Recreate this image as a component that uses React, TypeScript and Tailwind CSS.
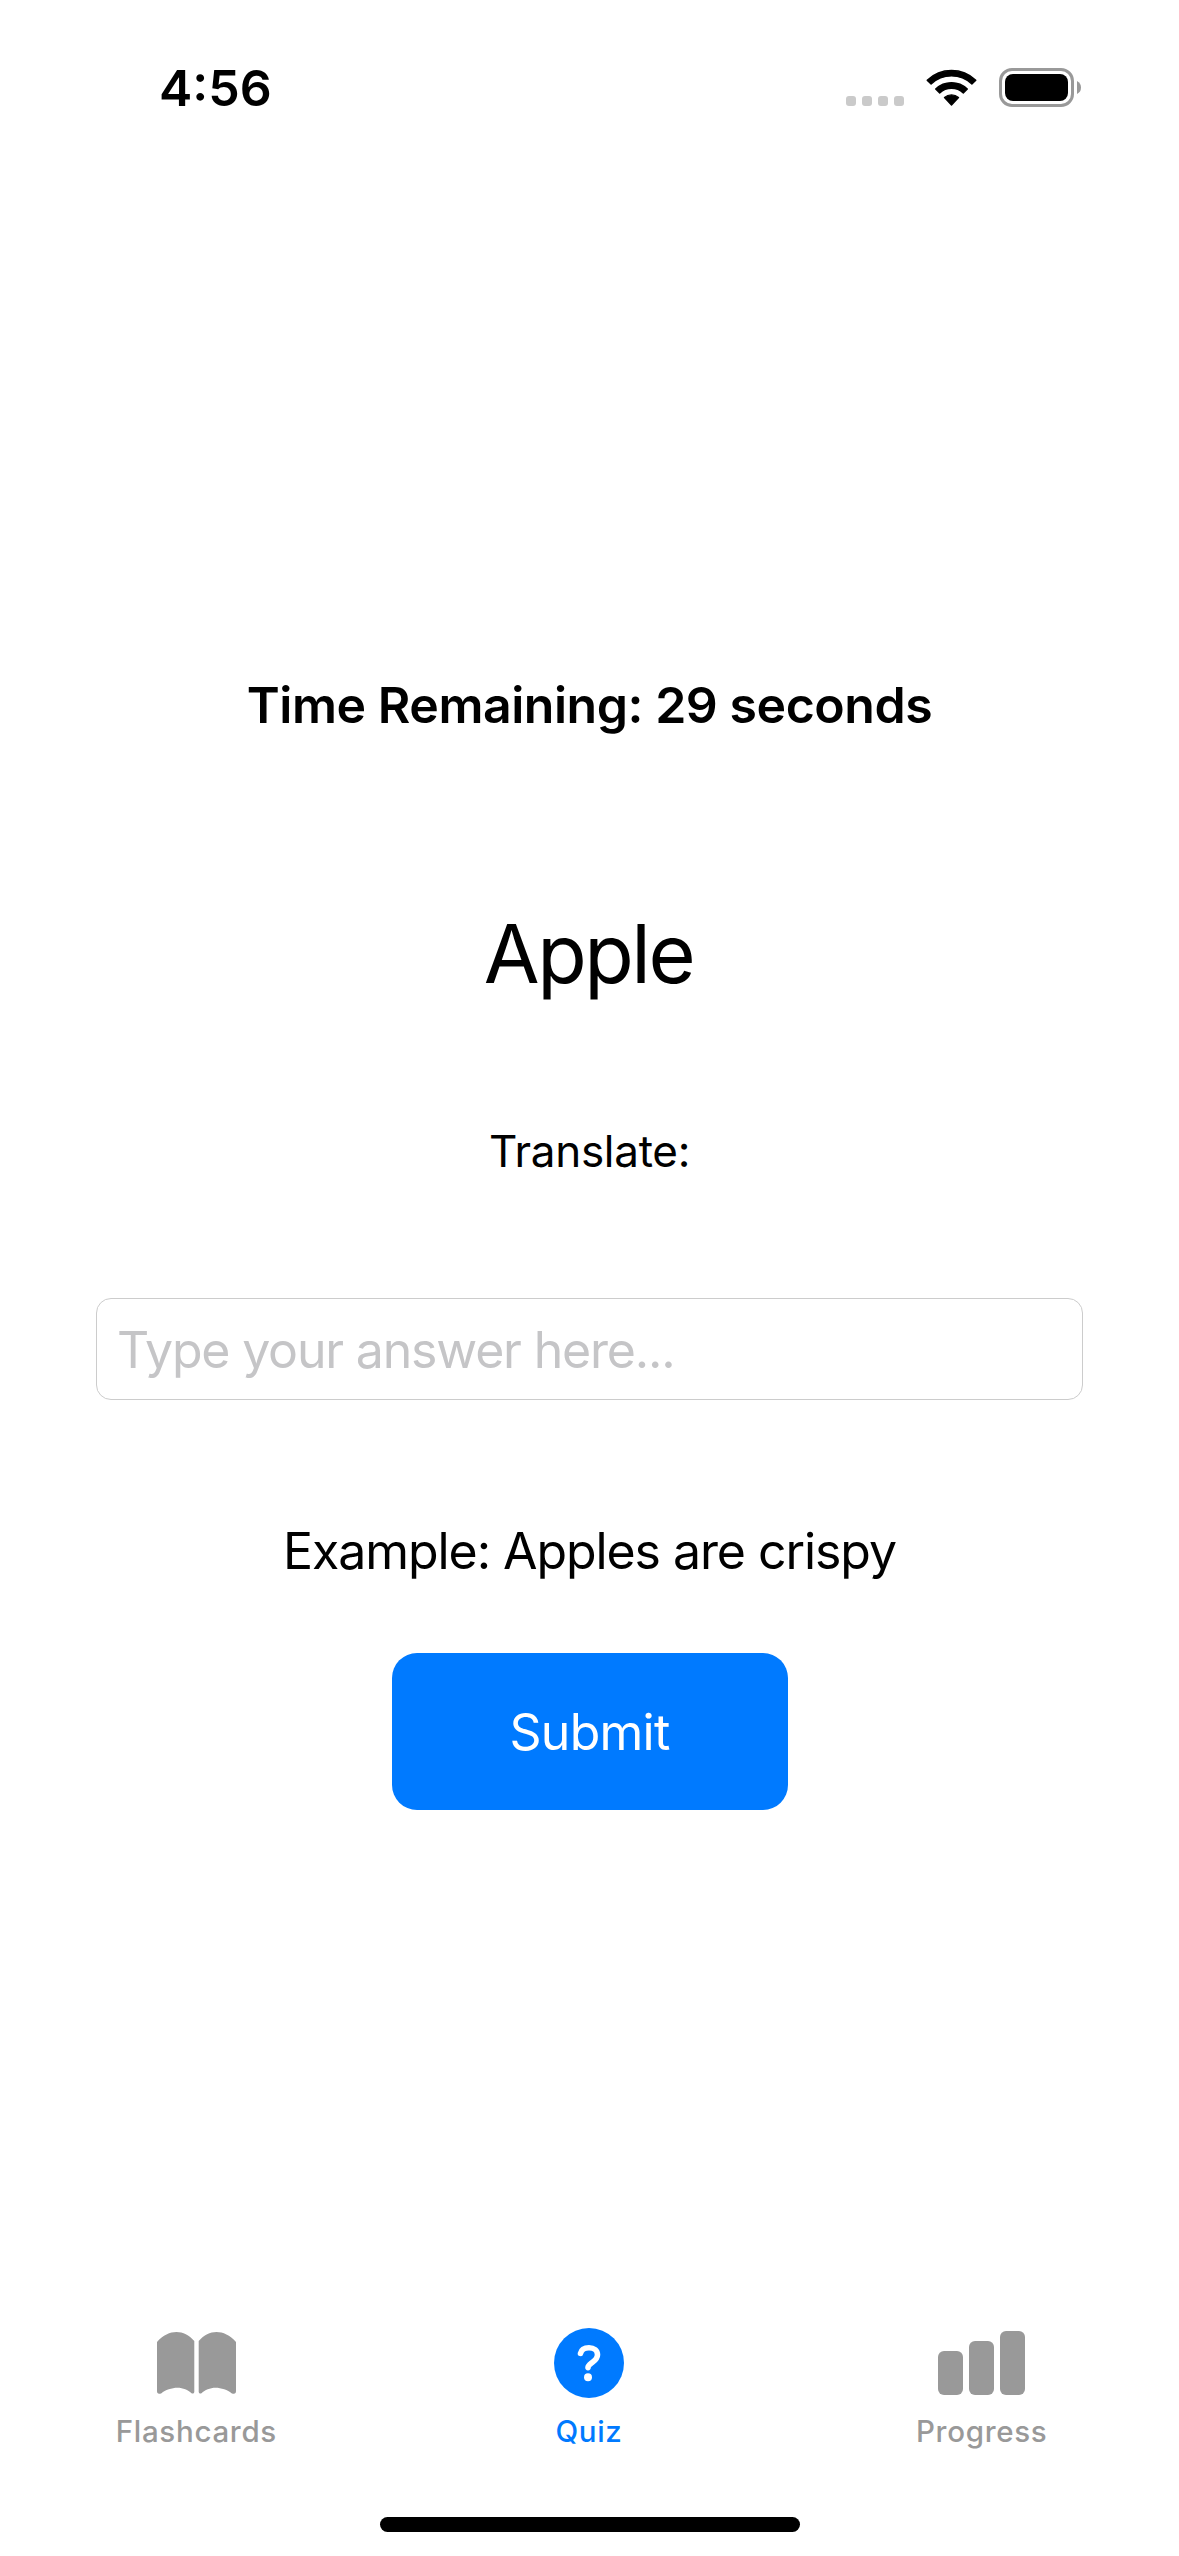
import { type ReactNode } from 'react';

function StatusBar() {
  return (
    <header className="flex h-[177px] items-start justify-between pl-[159px] pr-[98px]">
      <time className="pt-[58px] text-[50px] font-semibold leading-[60px]">4:56</time>
      <div className="flex pt-[68px]">
        <div className="mr-[22px] flex gap-1.5 pt-[28px]">
          <span className="size-[10px] rounded-[3px] bg-[#cacaca]" />
          <span className="size-[10px] rounded-[3px] bg-[#cacaca]" />
          <span className="size-[10px] rounded-[3px] bg-[#cacaca]" />
          <span className="size-[10px] rounded-[3px] bg-[#cacaca]" />
        </div>
        <svg className="mr-[21px] mt-px" width="52" height="38" viewBox="-25.5 -36.5 52 38" stroke="#000" strokeLinejoin="round" strokeWidth="1.4">
          <path d="M-24.3-25.3A35.1 35.1 0 0 1 24.3-25.3L20.4-21.4A29.5 29.5 0 0 0-20.4-21.4Z" />
          <path d="M-15.8-16.6A23 23 0 0 1 15.8-16.6L11.8-12.6A17.3 17.3 0 0 0-11.8-12.6Z" />
          <path d="M-7-8A10.8 10.8 0 0 1 7-8L0-.6Z" />
        </svg>
        <div className="h-[39px] w-[75px] rounded-[13px] border-[3px] border-[#999] p-[3px]">
          <div className="h-full w-full rounded-[8px] bg-black" />
        </div>
        <svg className="ml-[3px] mt-[13px]" width="4" height="13" viewBox="0 0 4 13" fill="#999">
          <path d="M0 0Q4 2 4 6.5T0 13Z" />
        </svg>
      </div>
    </header>
  );
}

function BookIcon() {
  const page =
    'M0 10C6 3 13 0 19.5 0S32 3 37.3 9V60Q36.8 62.4 34.5 61.2C31 58 26 55.7 20.5 55.7S8 58 4.5 61.2Q0 63 0 59Z';
  return (
    <svg width="79" height="62" viewBox="0 0 79 62" fill="currentColor">
      <path d={page} />
      <path d={page} transform="translate(79 0) scale(-1 1)" />
    </svg>
  );
}

function QuestionIcon() {
  return (
    <svg width="70" height="70" viewBox="0 0 70 70" fill="none">
      <circle cx="35" cy="35" r="35" fill="currentColor" />
      <path
        d="M26.5 25.3C27.5 21 31 19.7 35 19.7C40 19.7 43.5 22.4 43.5 26.7C43.5 31 40.5 32.8 37.5 35C35 36.8 34 37.8 34 39.6"
        stroke="#fff"
        strokeWidth="5.6"
        strokeLinecap="round"
      />
      <circle cx="34" cy="49.3" r="4" fill="#fff" />
    </svg>
  );
}

function BarsIcon() {
  return (
    <div className="flex items-end gap-1.5">
      <span className="h-[44px] w-[25px] rounded-[6px] bg-current" />
      <span className="h-[54px] w-[25px] rounded-[6px] bg-current" />
      <span className="h-[64px] w-[25px] rounded-[6px] bg-current" />
    </div>
  );
}

function Tab({ icon, label, active = false }: { icon: ReactNode; label: string; active?: boolean }) {
  return (
    <button className={`flex flex-1 flex-col items-center ${active ? 'text-[#007aff]' : 'text-[#999]'}`}>
      <span className="flex h-[72px] items-center justify-center">{icon}</span>
      <span className="mt-[14px] text-[29.5px] font-medium leading-[36px] tracking-[0.7px]">{label}</span>
    </button>
  );
}

export default function App() {
  return (
    <div className="flex h-[2556px] w-[1179px] flex-col bg-white font-['Inter',sans-serif] text-black">
      <StatusBar />
      <main className="flex flex-1 flex-col items-center px-24 pt-[498px]">
        <h2 className="text-[50px] font-semibold leading-[60px] tracking-[-0.46px]">Time Remaining: 29 seconds</h2>
        <h1 className="mr-[2px] mt-[169px] text-[81px] leading-[100px] tracking-[-2.5px]">Apple</h1>
        <p className="mt-[120px] text-[44px] leading-[54px] tracking-[-0.3px]">Translate:</p>
        <input
          className="mt-[120px] h-[102px] w-full rounded-[15px] border border-[#ccc] px-[20px] pt-[2px] text-[50px] tracking-[-1.18px] placeholder:text-[#c5c5c7]"
          placeholder="Type your answer here..."
        />
        <p className="mt-[121px] text-[50px] leading-[60px] tracking-[-1.07px]">Example: Apples are crispy</p>
        <button className="mt-[72px] h-[157px] w-[396px] rounded-[25px] bg-[#007aff] pt-px text-[50px] tracking-[-0.75px] text-white">
          Submit
        </button>
      </main>
      <nav className="flex h-[190px] pr-px">
        <Tab icon={<BookIcon />} label="Flashcards" />
        <Tab icon={<QuestionIcon />} label="Quiz" active />
        <Tab icon={<BarsIcon />} label="Progress" />
      </nav>
      <div className="mb-[24px] ml-[380px] h-[15px] w-[420px] rounded-full bg-black" />
    </div>
  );
}
